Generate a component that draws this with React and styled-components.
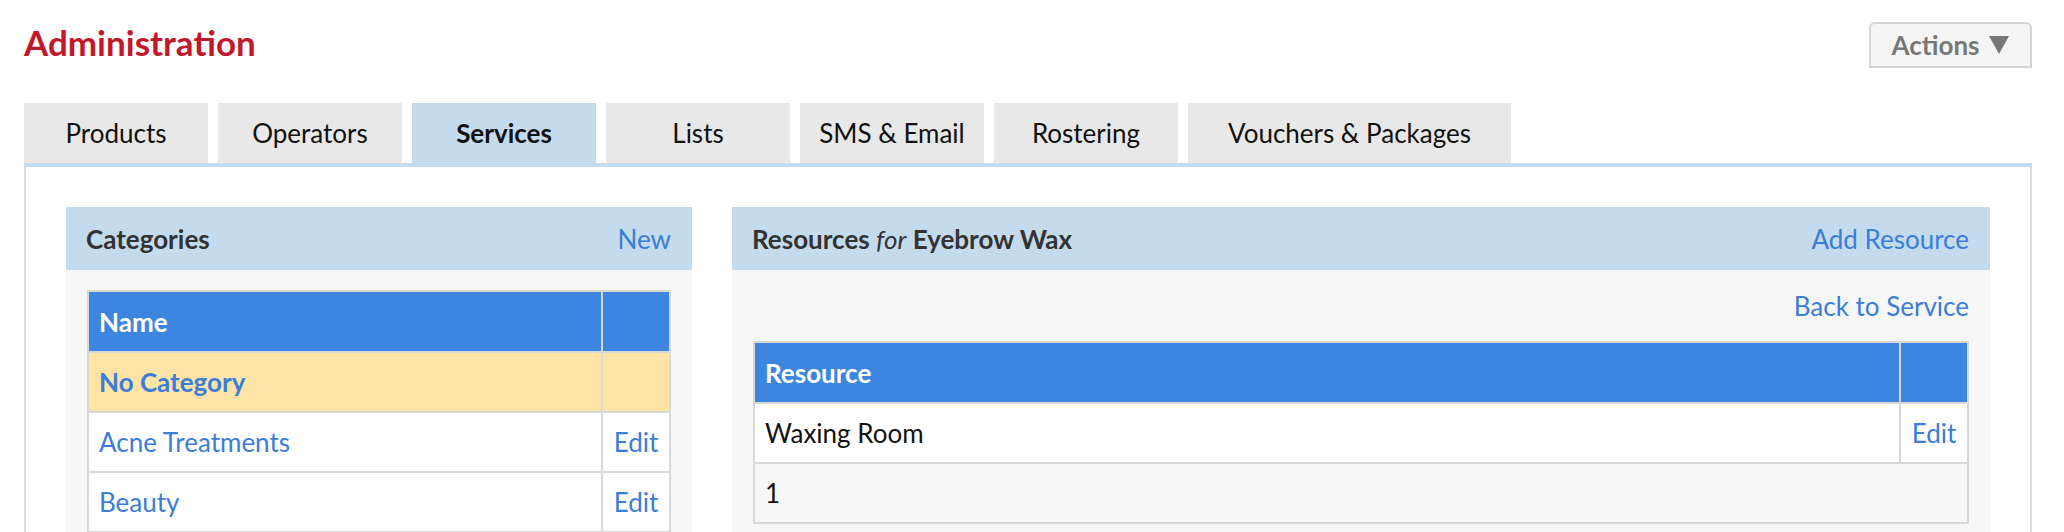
import styled, { createGlobalStyle, css } from "styled-components";

const GlobalStyle = createGlobalStyle`
  body {
    margin: 0;
    background: #ffffff;
    font-family: Lato, "Liberation Sans", sans-serif;
    color: #333333;
  }
  * {
    box-sizing: border-box;
  }
`;

const tabs = [
  "Products",
  "Operators",
  "Services",
  "Lists",
  "SMS & Email",
  "Rostering",
  "Vouchers & Packages",
];

const categories = [
  { name: "No Category", selected: true },
  { name: "Acne Treatments" },
  { name: "Beauty" },
];

export default function App() {
  return (
    <Page>
      <GlobalStyle />
      <TopBar>
        <Title>Administration</Title>
        <ActionsButton>
          Actions
          <svg width="22" height="20" viewBox="0 0 22 20">
            <path d="M1 1 L21 1 L11 19 Z" fill="#777777" />
          </svg>
        </ActionsButton>
      </TopBar>

      <TabBar>
        {tabs.map((t) => (
          <Tab
            key={t}
            $active={t === "Services"}
            $wide={t === "Vouchers & Packages"}
          >
            {t}
          </Tab>
        ))}
      </TabBar>

      <Panel>
        <Box>
          <BoxHeader>
            <BoxTitle>Categories</BoxTitle>
            <Link>New</Link>
          </BoxHeader>
          <BoxBody>
            <Table>
              <thead>
                <tr>
                  <Th>Name</Th>
                  <Th $narrow />
                </tr>
              </thead>
              <tbody>
                {categories.map((c) => (
                  <Row key={c.name} $selected={c.selected}>
                    <Td>
                      <Link $bold={c.selected}>{c.name}</Link>
                    </Td>
                    <Td $narrow>{!c.selected && <Link>Edit</Link>}</Td>
                  </Row>
                ))}
              </tbody>
            </Table>
          </BoxBody>
        </Box>

        <Box>
          <BoxHeader>
            <BoxTitle>
              Resources <For>for</For> Eyebrow Wax
            </BoxTitle>
            <Link>Add Resource</Link>
          </BoxHeader>
          <BoxBody>
            <BackRow>
              <Link>Back to Service</Link>
            </BackRow>
            <Table>
              <thead>
                <tr>
                  <Th>Resource</Th>
                  <Th $narrow />
                </tr>
              </thead>
              <tbody>
                <Row>
                  <Td>Waxing Room</Td>
                  <Td $narrow>
                    <Link>Edit</Link>
                  </Td>
                </Row>
                <FooterRow>
                  <Td colSpan={2}>1</Td>
                </FooterRow>
              </tbody>
            </Table>
          </BoxBody>
        </Box>
      </Panel>
    </Page>
  );
}

const Page = styled.div`
  padding: 0 32px 0 24px;
`;

const TopBar = styled.div`
  display: flex;
  justify-content: space-between;
  align-items: flex-start;
  height: 103px;
`;

const Title = styled.h1`
  margin: 0;
  padding-top: 22px;
  font-size: 35px;
  line-height: 40px;
  font-weight: 700;
  color: #c1182c;
`;

const ActionsButton = styled.button`
  margin-top: 22px;
  width: 163px;
  height: 46px;
  background: #f5f5f5;
  border: 2px solid #d6d6d6;
  border-radius: 6px 6px 0 0;
  font-family: Lato, "Liberation Sans", sans-serif;
  font-size: 26px;
  font-weight: 700;
  color: #777777;
  display: flex;
  align-items: center;
  justify-content: center;
  gap: 8px;
`;

const TabBar = styled.div`
  display: flex;
  gap: 10px;
  height: 60px;
`;

const Tab = styled.div`
  width: ${(p) => (p.$wide ? "323px" : "184px")};
  display: flex;
  align-items: center;
  justify-content: center;
  background: #e8e8e8;
  font-size: 26px;
  color: #111111;
  white-space: nowrap;
  ${(p) =>
    p.$active &&
    css`
      background: #c3dbec;
      font-weight: 700;
    `}
`;

const Panel = styled.div`
  border-top: 4px solid #c3dbec;
  border-left: 2px solid #dcdcdc;
  border-right: 2px solid #dcdcdc;
  padding: 40px;
  display: grid;
  grid-template-columns: 626px 1fr;
  gap: 40px;
  align-items: start;
`;

const Box = styled.div`
  background: #f7f7f7;
`;

const BoxHeader = styled.div`
  height: 63px;
  padding: 0 21px 0 20px;
  background: #c3dbec;
  display: flex;
  align-items: center;
  justify-content: space-between;
  font-size: 26px;
`;

const BoxTitle = styled.div`
  font-weight: 700;
  color: #333333;
`;

const For = styled.i`
  font-weight: 400;
`;

const Link = styled.a`
  color: #3b7dd8;
  font-weight: ${(p) => (p.$bold ? 700 : 400)};
  cursor: pointer;
`;

const BoxBody = styled.div`
  padding: 20px 21px;
`;

const BackRow = styled.div`
  display: flex;
  justify-content: flex-end;
  font-size: 26px;
  line-height: 32px;
  margin-bottom: 19px;
`;

const Table = styled.table`
  width: 100%;
  border-collapse: collapse;
  border: 2px solid #d8d8d8;
  font-size: 26px;
`;

const Th = styled.th`
  height: 61px;
  padding: 0 10px;
  background: #3e85e0;
  color: #ffffff;
  font-weight: 700;
  text-align: left;
  border: 2px solid #d8d8d8;
  width: ${(p) => (p.$narrow ? "68px" : "auto")};
`;

const Row = styled.tr`
  background: ${(p) => (p.$selected ? "#fde3a6" : "#ffffff")};
`;

const FooterRow = styled.tr`
  background: #f7f7f7;
`;

const Td = styled.td`
  height: 60px;
  padding: 0 10px;
  border: 2px solid #d8d8d8;
  color: #111111;
  text-align: ${(p) => (p.$narrow ? "center" : "left")};
`;
